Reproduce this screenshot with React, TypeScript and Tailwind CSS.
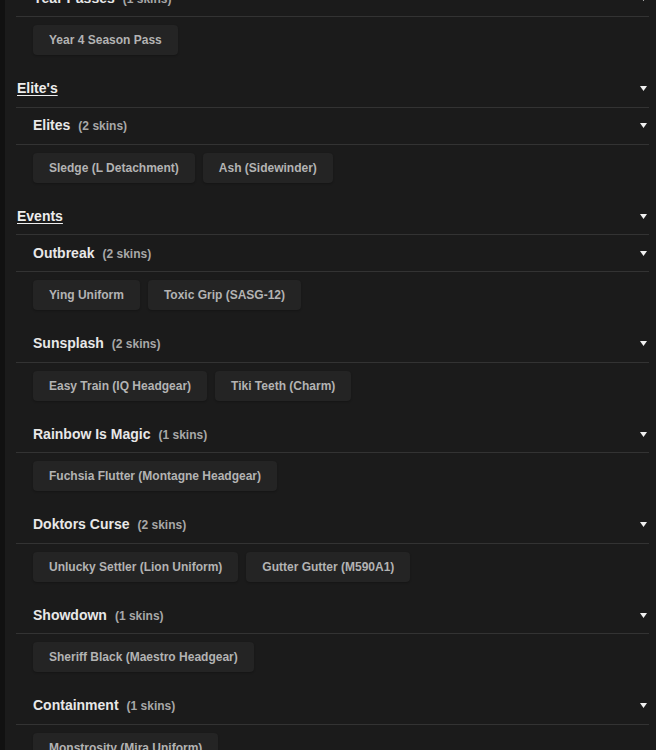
import React from "react";

type Sub = { name: string; skins: string[] };
type Category = { name?: string; subs: Sub[] };

const data: Category[] = [
  { subs: [{ name: "Year Passes", skins: ["Year 4 Season Pass"] }] },
  {
    name: "Elite's",
    subs: [{ name: "Elites", skins: ["Sledge (L Detachment)", "Ash (Sidewinder)"] }],
  },
  {
    name: "Events",
    subs: [
      { name: "Outbreak", skins: ["Ying Uniform", "Toxic Grip (SASG-12)"] },
      { name: "Sunsplash", skins: ["Easy Train (IQ Headgear)", "Tiki Teeth (Charm)"] },
      { name: "Rainbow Is Magic", skins: ["Fuchsia Flutter (Montagne Headgear)"] },
      { name: "Doktors Curse", skins: ["Unlucky Settler (Lion Uniform)", "Gutter Gutter (M590A1)"] },
      { name: "Showdown", skins: ["Sheriff Black (Maestro Headgear)"] },
      { name: "Containment", skins: ["Monstrosity (Mira Uniform)"] },
    ],
  },
];

const Arrow = () => (
  <svg width="7" height="5" viewBox="0 0 7 5" className="mr-[2px]">
    <path d="M0 0h7L3.5 5z" fill="#f0f0f0" />
  </svg>
);

const App: React.FC = () => {
  return (
    <div className="h-[750px] overflow-hidden bg-[#1b1b1b] flex font-['Liberation_Sans',Arial,sans-serif]">
      <div className="w-[5px] shrink-0 bg-[#111111]" />
      <div className="ml-[11px] w-[633px] -mt-5">
        {data.map((cat, ci) => (
          <div key={ci}>
            {cat.name && (
              <div className="h-[37px] flex items-center justify-between border-b border-[#333333] pl-px">
                <span className="text-[14px] font-bold text-[#ededed] underline underline-offset-2">
                  {cat.name}
                </span>
                <Arrow />
              </div>
            )}
            {cat.subs.map((sub) => (
              <div key={sub.name}>
                <div className="h-[37px] flex items-center justify-between border-b border-[#333333] pl-[17px]">
                  <div className="flex items-baseline gap-2">
                    <span className="text-[14px] font-bold text-[#e8e8e8]">{sub.name}</span>
                    <span className="text-[12px] font-bold text-[#a8a8a8]">
                      ({sub.skins.length} skins)
                    </span>
                  </div>
                  <Arrow />
                </div>
                <div className="flex flex-wrap gap-2 pl-[17px] pt-2 pb-[15.5px]">
                  {sub.skins.map((s) => (
                    <div
                      key={s}
                      className="h-[30px] px-4 flex items-center rounded bg-[#242424] text-[12px] font-bold text-[#b3b3b3] shadow-[0_1px_2px_rgba(0,0,0,0.25)]"
                    >
                      {s}
                    </div>
                  ))}
                </div>
              </div>
            ))}
          </div>
        ))}
      </div>
    </div>
  );
};

export default App;
